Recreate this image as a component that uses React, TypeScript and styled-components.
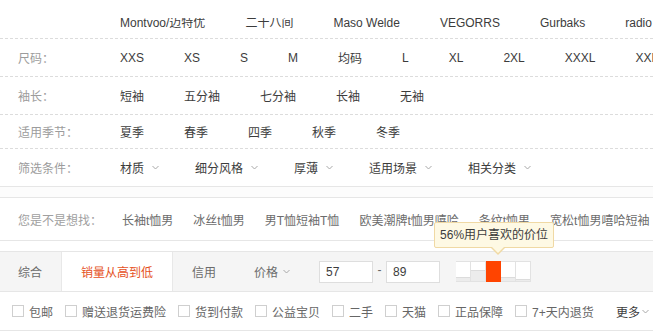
import React from "react";
import styled, { createGlobalStyle } from "styled-components";

const GlobalStyle = createGlobalStyle`
  html, body {
    margin: 0;
    padding: 0;
    background: #fff;
  }
  body {
    font-family: "Liberation Sans", Arial, "Noto Sans CJK SC", sans-serif;
    font-size: 12px;
    color: #3c3c3c;
  }
`;

const Page = styled.div`
  width: 653px;
  height: 335px;
  overflow: hidden;
`;

// ---- attribute filter rows ----
const FilterRow = styled.div<{ $h: number; $solid?: boolean }>`
  display: flex;
  align-items: center;
  height: ${(p) => p.$h}px;
  border-bottom: ${(p) => (p.$solid ? "none" : "1px dashed #dcdcdc")};
  white-space: nowrap;
`;

const Label = styled.div`
  flex-shrink: 0;
  width: 102px;
  padding-left: 18px;
  color: #9c9c9c;
`;

const Values = styled.div`
  display: flex;
  align-items: center;
  gap: 40px;
`;

const BrandRow = styled.div`
  height: 39px;
  border-bottom: 1px dashed #dcdcdc;
  padding: 18px 0 0 120px;
  box-sizing: border-box;
`;

// the brand list is scrolled a little, so its first line is clipped at the top
const BrandViewport = styled.div`
  height: 20px;
  overflow: hidden;
`;

const BrandStrip = styled.div`
  display: flex;
  gap: 40px;
  margin-top: -5px;
  line-height: 20px;
  white-space: nowrap;
`;

const Drop = styled.span`
  display: inline-flex;
  align-items: center;
  gap: 8px;
  margin-right: -4px;
`;

const Spacer = styled.div`
  height: 10px;
  border-top: 1px solid #e6e6e6;
  border-bottom: 1px solid #e6e6e6;
  background: #fcfcfc;
`;

// ---- "did you mean" row ----
const SuggestRow = styled.div`
  display: flex;
  align-items: center;
  height: 42px;
  padding-left: 18px;
  border-bottom: 1px solid #e6e6e6;
  white-space: nowrap;
`;

const SuggestLabel = styled.span`
  color: #a0a0a0;
`;

const SuggestItem = styled.span`
  margin-left: 20px;
  color: #6c6c6c;
`;

// ---- sort bar ----
const SortBar = styled.div`
  display: flex;
  align-items: stretch;
  height: 39px;
  margin-top: 10px;
  border-top: 1px solid #e6e6e6;
  border-bottom: 1px solid #e6e6e6;
  background: #f5f5f5;
`;

const SortTab = styled.div<{ $active?: boolean }>`
  display: flex;
  align-items: center;
  gap: 5px;
  padding: 0 19px;
  color: ${(p) => (p.$active ? "#e5511d" : "#6c6c6c")};
  background: ${(p) => (p.$active ? "#fff" : "transparent")};
  border-left: ${(p) => (p.$active ? "1px solid #e8e8e8" : "none")};
  border-right: ${(p) => (p.$active ? "1px solid #e8e8e8" : "none")};

  &:first-child {
    padding-left: 18px;
  }
`;

const PriceRange = styled.div`
  display: flex;
  align-items: center;
  margin-left: 10px;
`;

const PriceInput = styled.input`
  box-sizing: border-box;
  width: 54px;
  height: 22px;
  padding: 0 6px;
  border: 1px solid #dedede;
  background: #fff;
  font: inherit;
  color: #3c3c3c;
  outline: none;
`;

const Dash = styled.span`
  width: 13px;
  text-align: center;
  color: #666;
  margin-top: -4px;
`;

const Histogram = styled.div`
  position: relative;
  display: flex;
  margin-left: 16px;
`;

const HistCol = styled.div<{ $hot?: boolean }>`
  box-sizing: border-box;
  width: 15px;
  height: 21px;
  border: 1px solid ${(p) => (p.$hot ? "#ff4400" : "#e2e2e2")};
  border-left: none;
  background: ${(p) => (p.$hot ? "#ff4400" : "#fff")};
  display: flex;
  align-items: flex-end;

  &:first-child {
    border-left: 1px solid #e2e2e2;
  }
`;

const HistFill = styled.div`
  width: 100%;
  background: #ececec;
  border-top: 1px solid #dcdcdc;
`;

const Tip = styled.div`
  position: absolute;
  left: -22px;
  top: -39px;
  z-index: 2;
  box-sizing: border-box;
  width: 120px;
  height: 26px;
  line-height: 24px;
  text-align: center;
  white-space: nowrap;
  color: #3c3c3c;
  background: #fef9e4;
  border: 1px solid #f0d9a4;
  border-radius: 2px;

  &::before,
  &::after {
    content: "";
    position: absolute;
    left: 56px;
    width: 0;
    height: 0;
    border-style: solid;
  }
  &::before {
    bottom: -8px;
    border-width: 7px 7px 0 7px;
    border-color: #f0d9a4 transparent transparent transparent;
  }
  &::after {
    bottom: -6px;
    left: 57px;
    border-width: 6px 6px 0 6px;
    border-color: #fef9e4 transparent transparent transparent;
  }
`;

// ---- service checkboxes ----
const Services = styled.div`
  display: flex;
  align-items: center;
  height: 38px;
  padding: 0 4px 0 12px;
  border-bottom: 1px solid #e6e6e6;
  white-space: nowrap;
`;

const Service = styled.label`
  display: flex;
  align-items: center;
  gap: 5px;
  margin-right: 12px;
  color: #666;
`;

const Box = styled.span`
  width: 10px;
  height: 10px;
  border: 1px solid #cfcfcf;
  background: #fff;
`;

const More = styled.span`
  display: flex;
  align-items: center;
  gap: 2px;
  margin-left: auto;
  color: #3c3c3c;
`;

const Chevron = ({ color = "#a8a8a8" }: { color?: string }) => (
  <svg width="7" height="5" viewBox="0 0 7 5">
    <polyline points="0.5,1 3.5,4 6.5,1" fill="none" stroke={color} strokeWidth="1" />
  </svg>
);

const brands = ["Montvoo/迈特优", "二十八间", "Maso Welde", "VEGORRS", "Gurbaks", "radio"];
const sizes = ["XXS", "XS", "S", "M", "均码", "L", "XL", "2XL", "XXXL", "XXL"];
const sleeves = ["短袖", "五分袖", "七分袖", "长袖", "无袖"];
const seasons = ["夏季", "春季", "四季", "秋季", "冬季"];
const extras = ["材质", "细分风格", "厚薄", "适用场景", "相关分类"];
const suggests = ["长袖t恤男", "冰丝t恤男", "男T恤短袖T恤", "欧美潮牌t恤男嘻哈", "条纹t恤男", "宽松t恤男嘻哈短袖"];
const services = ["包邮", "赠送退货运费险", "货到付款", "公益宝贝", "二手", "天猫", "正品保障", "7+天内退货"];
// fill height (px) of each price column
const hist = [3, 10, 21, 3, 1];

export default function App() {
  return (
    <Page>
      <GlobalStyle />
      <BrandRow>
        <BrandViewport>
          <BrandStrip>
            {brands.map((b) => (
              <span key={b}>{b}</span>
            ))}
          </BrandStrip>
        </BrandViewport>
      </BrandRow>

      <FilterRow $h={37}>
        <Label>尺码：</Label>
        <Values>
          {sizes.map((s) => (
            <span key={s}>{s}</span>
          ))}
        </Values>
      </FilterRow>

      <FilterRow $h={37}>
        <Label>袖长：</Label>
        <Values>
          {sleeves.map((s) => (
            <span key={s}>{s}</span>
          ))}
        </Values>
      </FilterRow>

      <FilterRow $h={33}>
        <Label>适用季节：</Label>
        <Values>
          {seasons.map((s) => (
            <span key={s}>{s}</span>
          ))}
        </Values>
      </FilterRow>

      <FilterRow $h={37} $solid>
        <Label>筛选条件：</Label>
        <Values>
          {extras.map((s) => (
            <Drop key={s}>
              {s}
              <Chevron />
            </Drop>
          ))}
        </Values>
      </FilterRow>

      <Spacer />

      <SuggestRow>
        <SuggestLabel>您是不是想找：</SuggestLabel>
        {suggests.map((s) => (
          <SuggestItem key={s}>{s}</SuggestItem>
        ))}
      </SuggestRow>

      <SortBar>
        <SortTab>综合</SortTab>
        <SortTab $active>销量从高到低</SortTab>
        <SortTab>信用</SortTab>
        <SortTab>
          价格
          <Chevron />
        </SortTab>
        <PriceRange>
          <PriceInput defaultValue="57" />
          <Dash>-</Dash>
          <PriceInput defaultValue="89" />
          <Histogram>
            <Tip>56%用户喜欢的价位</Tip>
            {hist.map((h, i) => (
              <HistCol key={i} $hot={i === 2}>
                {i !== 2 && <HistFill style={{ height: h }} />}
              </HistCol>
            ))}
          </Histogram>
        </PriceRange>
      </SortBar>

      <Services>
        {services.map((s) => (
          <Service key={s}>
            <Box />
            {s}
          </Service>
        ))}
        <More>
          更多
          <Chevron />
        </More>
      </Services>
    </Page>
  );
}
